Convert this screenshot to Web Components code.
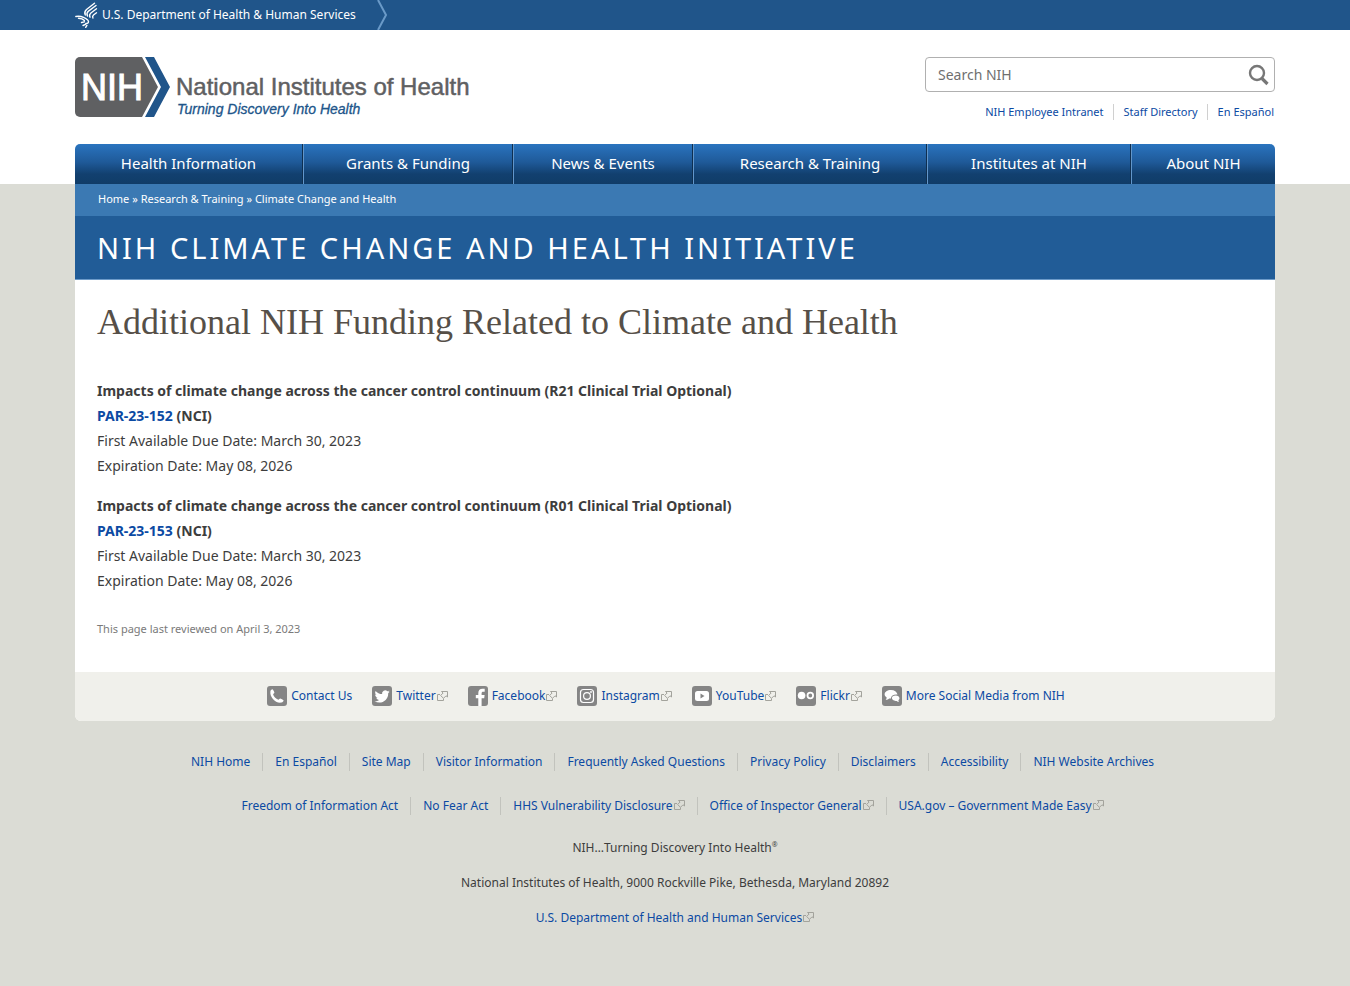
<!DOCTYPE html>
<html lang="en">
<head>
<meta charset="utf-8">
<meta name="viewport" content="width=device-width, initial-scale=1">
<title>Additional NIH Funding Related to Climate and Health</title>
<style>
  body { margin: 0; background: #dbdcd5; color: #3d3d3d; font-family: "Noto Sans", "Open Sans", sans-serif; font-size: 14px; line-height: 24px; }
</style>
</head>
<body>
<nih-topbar></nih-topbar>
<nih-header></nih-header>
<nih-main>
  <nih-article slot="content"></nih-article>
</nih-main>
<nih-footer></nih-footer>

<script>
const BASE = `
  *, *::before { box-sizing: border-box; }
  :host { display: block; }
  a { color: #0b4aa3; text-decoration: none; }
  a:hover { text-decoration: underline; }
  ul, p, h1, h2 { margin: 0; padding: 0; }
  ul { list-style: none; }
  svg { display: block; }
  .wrap { max-width: 1200px; margin: 0 auto; }
  @media (max-width: 1240px) { .wrap { margin: 0 16px; } }
`;

function define(name, css, html) {
  customElements.define(name, class extends HTMLElement {
    constructor() {
      super();
      const root = this.attachShadow({ mode: 'open' });
      const tpl = document.createElement('template');
      tpl.innerHTML = `<style>${BASE}${css}</style>${typeof html === 'function' ? html(this) : html}`;
      root.append(tpl.content.cloneNode(true));
    }
  });
}

/* Small arrow-and-box mark after links that leave the site */
define('ext-mark', `
  :host { display: inline-block; width: 11px; height: 10px; margin-left: 1px; }
`, `<svg width="11" height="10" viewBox="0 0 11 10" fill="none" stroke="#a3a39c" aria-hidden="true">
  <path d="M3 3.500H.5v6h6V7.500"/><path d="M4.500 .5h6v5.500L9 4.800 6.500 7.300 3.600 4.500 6.100 2z"/></svg>`);

const GLYPHS = {
  phone: '<path fill="#fff" d="M3.400 5.200C3.900 4 5 3.200 5.800 3.400c.8.9 1.300 2 1.600 3.200 0 .7-1 1.100-1.300 1.700.6 2.400 2.700 4.600 5.300 5.400.7-.2 1.100-1.200 1.900-1.200 1.100.3 2.300 1 3.200 1.700.3.9-.8 2-2 2.300C8.600 17.600 2.600 11.400 3.400 5.200z"/>',
  twitter: '<path fill="#fff" d="M17.800 5.600c-.5.3-1.100.5-1.800.6.6-.4 1.100-1 1.300-1.700-.6.4-1.200.6-1.900.8a3.100 3.100 0 0 0-5.300 2.800C7.500 8 5.200 6.800 3.600 4.900c-.9 1.500-.4 3.200.9 4.100-.5 0-1-.1-1.400-.4 0 1.600 1.100 2.800 2.500 3.100-.4.1-.9.1-1.400.1.400 1.200 1.500 2.100 2.900 2.100-1.300 1-2.900 1.500-4.600 1.300 6.200 3.800 14-.5 13.700-7.900.6-.5 1.100-1 1.600-1.700z"/>',
  facebook: '<path fill="#fff" d="M10.300 20v-7.800H7.800V9h2.500V7c0-2.800 1.600-4.300 4.200-4.300h2.200v3h-1.600c-1.100 0-1.500.6-1.500 1.500V9h3l-.4 3.200h-2.600V20z"/>',
  instagram: '<g fill="none" stroke="#fff" stroke-width="1.200"><rect x="3.500" y="3.500" width="13" height="13" rx="3"/><circle cx="10" cy="10" r="3.400"/></g><circle cx="14" cy="6" r=".9" fill="#fff"/>',
  youtube: '<rect x="3" y="5" width="14" height="10" rx="2.500" fill="#fff"/><path fill="#858585" d="M8.500 7.500v5l4-2.500z"/>',
  flickr: '<circle cx="5.600" cy="9.500" r="3.800" fill="#fff"/><circle cx="14.300" cy="9.500" r="2.800" fill="none" stroke="#fff" stroke-width="1.800"/>',
  chat: '<path fill="#fff" d="M9 4c-3.700 0-6.400 1.900-6.400 4.300 0 1.400.8 2.500 2.100 3.200 0 .9-.4 1.600-1.100 2.200 1.700 0 2.900-.6 3.600-1.300l1.700.1c.1-2.800 2.700-4.300 6.600-4C14.900 5.800 12.500 4 9 4z"/><path fill="#fff" d="M13.600 9.400c-2.200 0-3.700 1.100-3.700 2.700s1.600 2.800 3.800 2.800h1c.6.6 1.400.9 2.300 1-.4-.5-.7-1-.6-1.700.7-.5 1.100-1.200 1.100-2 0-1.700-1.600-2.800-3.900-2.800z"/>'
};
define('social-link', `
  a { display: flex; align-items: center; line-height: 20px; font-size: 12px; }
  svg { margin-right: 4px; flex: none; }
`, el => `<a href="#"><svg width="20" height="20" viewBox="0 0 20 20" aria-hidden="true"><rect width="20" height="20" rx="3" fill="#858585"/>${GLYPHS[el.getAttribute('icon')]}</svg><slot></slot>${el.hasAttribute('external') ? '<ext-mark></ext-mark>' : ''}</a>`);

/* Row of links split by thin rules */
define('link-row', `
  ul { display: flex; flex-wrap: wrap; justify-content: var(--row-justify, center); row-gap: 8px; }
  li { padding: 0 12px; line-height: 18px; border-left: 1px solid #c2c3bd; }
  li:first-child { border-left: 0; }
  :host([small]) li { font-size: 11px; padding: 0 9px 0 10px; line-height: 16px; border-color: #d0d0d0; }
  :host([small]) li:last-child { padding-right: 0; }
`, el => `<ul>${el.getAttribute('items').split('|').map(t => {
  const ext = t.endsWith('*');
  return `<li><a href="#">${ext ? t.slice(0, -1) : t}${ext ? '<ext-mark></ext-mark>' : ''}</a></li>`;
}).join('')}</ul>`);

define('nih-topbar', `
  :host { background: #20558a; }
  a { display: flex; align-items: center; width: max-content; height: 30px; color: #fff; font-size: 12px; }
  .bird { margin-right: 4px; }
  .chevron { margin-left: 20px; }
`, `<div class="wrap"><a href="#">
  <svg class="bird" width="23" height="28" viewBox="0 0 23 28" fill="none" stroke="#fff" stroke-width="1.400" stroke-linecap="round" stroke-linejoin="round" aria-hidden="true">
    <path d="M19.500 2.200L11.500 8.500C9.600 10.300 9.400 12.200 10.300 14"/>
    <path d="M21 4.500l-7.500 5.600c-1.800 1.600-1.900 3.300-1 5"/>
    <path d="M21.500 7.800l-5.600 4.200c-1.500 1.300-1.600 2.800-.9 4.200"/>
    <path d="M21.500 11.800l-3 2.200c-1 1-1.100 2-.6 3"/>
    <path d="M.8 15.500c2.900-.5 5.400-.2 7.700.8 2.900 1.200 5 2.500 5 4.400 0 1.400-1.300 2-2.600 1.700"/>
    <path d="M3.500 17.200c2.500 0 4.600.7 5.900 2.300M6.500 21.500l3-.6M8 24.500l2.500-1.200M10.700 26.300l1.200-2"/>
  </svg>U.S. Department of Health &amp; Human Services
  <svg class="chevron" width="14" height="30" viewBox="0 0 14 30" fill="none" stroke="#6a9ac8" stroke-width="2" aria-hidden="true"><path d="M2 0l8 15-8 15"/></svg>
</a></div>`);

define('nih-logo', `
  a { display: block; }
  svg { font-family: "Liberation Sans", Arial, sans-serif; }
`, `<a href="#" aria-label="National Institutes of Health"><svg width="394" height="60" viewBox="0 0 394 60">
  <path fill="#5f6062" d="M5 0h62l16 30-16 30H5a5 5 0 0 1-5-5V5a5 5 0 0 1 5-5z"/>
  <path fill="#20558a" d="M70 0h9l16 30-16 30h-9l16-30z"/>
  <text x="6" y="43" font-size="36" fill="#fff" stroke="#fff" stroke-width="1">NIH</text>
  <text x="101" y="38" font-size="24" fill="#5f6062" stroke="#5f6062" stroke-width=".5">National Institutes of Health</text>
  <text x="102" y="57" font-size="14" font-style="italic" fill="#20558a" stroke="#20558a" stroke-width=".3">Turning Discovery Into Health</text>
</svg></a>`);

define('nih-search', `
  form { display: flex; align-items: center; height: 35px; border: 1px solid #b0b0b0; border-radius: 4px; background: #fff; }
  input { flex: 1; min-width: 0; height: 31px; border: 0; background: none; padding: 0 12px; font: inherit; font-size: 14px; color: #333; }
  input::placeholder { color: #6f6f6f; opacity: 1; }
  button { border: 0; background: none; padding: 0 5px; }
`, `<form role="search"><input type="search" placeholder="Search NIH" aria-label="Search NIH">
  <button type="button" aria-label="Search"><svg width="21" height="22" viewBox="0 0 21 22" fill="none" stroke="#777"><circle cx="9" cy="9" r="7" stroke-width="2.400"/><path d="M14 14.500l5.500 5.500" stroke-width="3.200"/></svg></button></form>`);

define('nih-header', `
  :host { background: #fff; padding-top: 27px; }
  .top { display: flex; justify-content: space-between; flex-wrap: wrap; gap: 16px; padding-bottom: 24px; }
  .tools { flex: 0 1 350px; --row-justify: flex-end; }
  link-row { margin: 12px 1px 0 0; }
  .nav { display: grid; grid-template-columns: 228fr 210fr 180fr 234fr 204fr 144fr; border-radius: 5px 5px 0 0; overflow: hidden;
    background: linear-gradient(#2a74bf, #1f5a99 45%, #12406f 75%, #103c68); }
  .nav a { display: block; text-align: center; color: #fff; font-size: 15px; line-height: 24px; padding: 7px 0 9px; white-space: nowrap; }
  .nav li + li a { border-left: 1px solid #6296ca; }
  .nav li:not(:last-child) { border-right: 1px solid #0f2f50; }
  @media (max-width: 900px) { .nav { grid-template-columns: repeat(2, 1fr); } }
`, `<div class="wrap">
  <div class="top"><nih-logo></nih-logo>
    <div class="tools"><nih-search></nih-search><link-row small items="NIH Employee Intranet|Staff Directory|En Español"></link-row></div></div>
  <nav><ul class="nav">${['Health Information', 'Grants &amp; Funding', 'News &amp; Events', 'Research &amp; Training', 'Institutes at NIH', 'About NIH'].map(t => `<li><a href="#">${t}</a></li>`).join('')}</ul></nav>
</div>`);

define('nih-main', `
  .wrap { background: #fff; border-radius: 0 0 6px 6px; overflow: hidden; }
  .crumbs { background: #3b79b3; color: #fff; font-size: 11px; line-height: 16px; padding: 7px 23px 9px; }
  .crumbs a { color: #fff; }
  h2 { background: #215c97; color: #fff; border-bottom: 1px solid #6d9bc9; font-weight: 400; font-size: 29px; line-height: 63px; padding: 0 22px; letter-spacing: 3px; text-transform: uppercase; }
  .social { display: flex; flex-wrap: wrap; justify-content: center; gap: 8px 20px; padding: 14px 18px 15px 0; background: #f0f0eb; }
`, `<div class="wrap">
  <nav class="crumbs" aria-label="Breadcrumb"><a href="#">Home</a> » <a href="#">Research &amp; Training</a> » <a href="#">Climate Change and Health</a></nav>
  <h2>NIH Climate Change and Health Initiative</h2>
  <slot name="content"></slot>
  <div class="social">
    <social-link icon="phone">Contact Us</social-link>
    <social-link icon="twitter" external>Twitter</social-link>
    <social-link icon="facebook" external>Facebook</social-link>
    <social-link icon="instagram" external>Instagram</social-link>
    <social-link icon="youtube" external>YouTube</social-link>
    <social-link icon="flickr" external>Flickr</social-link>
    <social-link icon="chat">More Social Media from NIH</social-link>
  </div>
</div>`);

define('funding-item', `
  :host { line-height: 25px; margin-bottom: 15px; }
  .strong { font-weight: 700; }
`, el => `<p class="strong"><slot></slot></p>
  <p class="strong"><a href="#">${el.getAttribute('code')}</a> (NCI)</p>
  <p>First Available Due Date: March 30, 2023</p><p>Expiration Date: May 08, 2026</p>`);

define('nih-article', `
  :host { padding: 18px 22px 35px; }
  h1 { font: 400 36px/48px "Liberation Serif", serif; color: #564f48; margin-bottom: 32px; }
  .reviewed { font-size: 11px; line-height: 16px; color: #7a7a7a; margin-top: 28px; }
`, `<h1>Additional NIH Funding Related to Climate and Health</h1>
  <funding-item code="PAR-23-152">Impacts of climate change across the cancer control continuum (R21 Clinical Trial Optional)</funding-item>
  <funding-item code="PAR-23-153">Impacts of climate change across the cancer control continuum (R01 Clinical Trial Optional)</funding-item>
  <p class="reviewed">This page last reviewed on April 3, 2023</p>`);

define('nih-footer', `
  footer { font-size: 12px; text-align: center; padding: 32px 0 56px; }
  .links { display: grid; gap: 26px; padding-right: 5px; margin-bottom: 23px; }
  p { line-height: 19px; margin-bottom: 16px; }
  sup { font-size: 7px; line-height: 0; }
`, `<footer class="wrap">
  <div class="links">
  <link-row items="NIH Home|En Español|Site Map|Visitor Information|Frequently Asked Questions|Privacy Policy|Disclaimers|Accessibility|NIH Website Archives"></link-row>
  <link-row items="Freedom of Information Act|No Fear Act|HHS Vulnerability Disclosure*|Office of Inspector General*|USA.gov – Government Made Easy*"></link-row>
  </div>
  <p>NIH…Turning Discovery Into Health<sup>®</sup></p>
  <p>National Institutes of Health, 9000 Rockville Pike, Bethesda, Maryland 20892</p>
  <p><a href="#">U.S. Department of Health and Human Services<ext-mark></ext-mark></a></p>
</footer>`);
</script>
</body>
</html>
